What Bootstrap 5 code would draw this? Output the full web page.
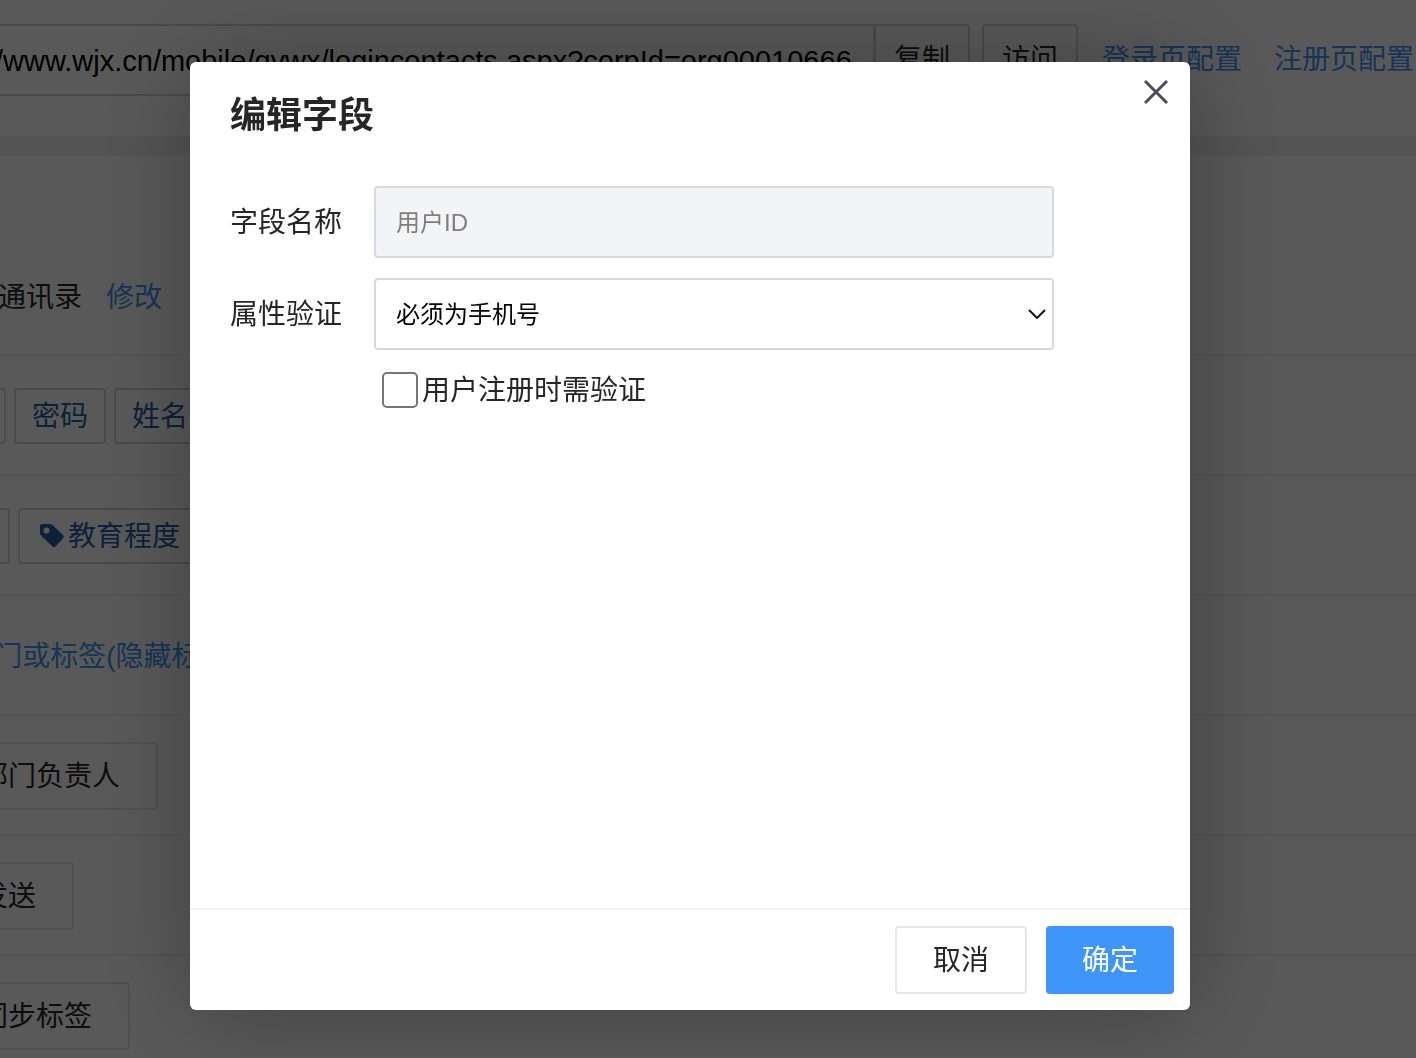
<!DOCTYPE html>
<html lang="zh-CN">
<head>
<meta charset="utf-8">
<meta name="viewport" content="width=device-width, initial-scale=1">
<title>编辑字段</title>
<link rel="stylesheet" href="https://cdn.jsdelivr.net/npm/bootstrap@5.3.0/dist/css/bootstrap.min.css">
<style>
  body {
    font-family: "Liberation Sans", "Noto Sans CJK SC", sans-serif;
    font-size: 28px;
    line-height: 40px;
    color: #262626;
    overflow: hidden;
  }
  a { color: #4095f8; text-decoration: none; }
  .backpage { height: 100vh; overflow: hidden; white-space: nowrap; }
  .linkbar { height: 136px; padding: 24px 2px 40px 0; margin-left: -106px; }
  .linkbar .form-control, .linkbar .btn {
    height: 72px; font-size: 28px; border: 2px solid #d4d4d4; border-radius: 4px; color: #262626;
  }
  .linkbar .form-control { padding: 2px 20px 0; font-size: 29px; color: #000; }
  .linkbar .btn { padding: 0 18px; }
  .linkbar .input-group .form-control { border-radius: 4px 0 0 4px; }
  .linkbar .input-group .btn { margin-left: -2px; border-radius: 0 4px 4px 0; }
  .linkbar .visit { margin-left: 12px; }
  .linkbar .links { gap: 32px; margin-left: 24px; }
  .gapband { height: 20px; background: #f0f0f0; }
  .settings { margin-left: -58px; }
  .setting { height: 120px; padding-top: 2px; border-bottom: 2px solid #f0f0f0; gap: 8px; }
  .setting > a { padding-top: 2px; }
  .setting.first { height: 200px; padding-top: 84px; gap: 24px; }
  .setting.first > span { padding-top: 2px; }
  .chip {
    height: 56px; padding: 2px 16px 0; border: 2px solid #d4d4d4; border-radius: 4px;
    font-size: 28px; line-height: 40px; color: #255ea8; background: none;
  }
  .chip.tagged { padding: 2px 18px 0; }
  .chip svg { width: 28px; height: 28px; margin-right: 2px; }
  .plain {
    height: 68px; padding: 2px 36px 0; border: 2px solid #e3e3e3; border-radius: 4px;
    font-size: 28px; color: #262626;
  }
  .modal-backdrop { --bs-backdrop-opacity: .65; }
  .modal { padding-right: 36px; }
  .modal-dialog { max-width: 1000px; margin: 62px auto 48px; }
  .modal-content {
    min-height: 948px; border: 0; border-radius: 6px; color: #262626;
    box-shadow: 2px 2px 100px rgba(0, 0, 0, .3);
  }
  .modal-header { border: 0; padding: 28px 20px 0 40px; align-items: flex-start; }
  .modal-title { font-size: 36px; line-height: 52px; font-weight: 700; }
  .closer { width: 28px; height: 28px; padding: 0; margin-top: -12px; border: 0; background: none; display: flex; }
  .modal-body { padding: 44px 136px 20px 40px; }
  .field { margin-bottom: 20px; }
  .field label.name { width: 144px; flex: none; padding-top: 2px; }
  .field .form-control, .field .form-select {
    height: 72px; padding: 0 20px; font-size: 24px; border: 2px solid #d9d9d9; border-radius: 4px;
  }
  .field .form-control:disabled { padding-bottom: 4px; background: #f2f4f5; color: #857c7c; }
  .field .form-select {
    padding-top: 2px;
    color: #000;
    background-image: url("data:image/svg+xml,%3Csvg xmlns='http://www.w3.org/2000/svg' viewBox='0 0 18 10'%3E%3Cpath d='M1 1l8 8 8-8' fill='none' stroke='%23111' stroke-width='2'/%3E%3C/svg%3E");
    background-size: 18px 10px; background-position: right 6px center;
  }
  .verify { height: 40px; margin-left: 152px; gap: 4px; }
  .verify label { padding-top: 2px; }
  .verify .form-check-input { width: 36px; height: 36px; margin: 0; border: 2px solid #767676; border-radius: 5px; }
  .modal-footer { padding: 16px; gap: 19px; border-top: 2px solid #f2f2f2; }
  .modal-footer .btn { height: 68px; margin: 0; padding: 2px 36px 0; font-size: 28px; border-radius: 4px; }
  .modal-footer .btn-cancel { border: 2px solid #e6e6e6; color: #262626; }
  .modal-footer .btn-ok { border: 0; background: #4095f8; color: #fff; }
</style>
</head>
<body>
<main class="backpage">
  <div class="linkbar d-flex align-items-center">
    <div class="input-group flex-nowrap flex-fill w-auto">
      <input type="text" class="form-control" aria-label="登录地址" value="https://www.wjx.cn/mobile/qywx/logincontacts.aspx?corpId=org000106660088">
      <button type="button" class="btn">复制</button>
    </div>
    <button type="button" class="btn visit">访问</button>
    <div class="links d-flex">
      <a href="#">登录页配置</a>
      <a href="#">注册页配置</a>
    </div>
  </div>
  <div class="gapband"></div>
  <div class="settings">
    <div class="setting first d-flex align-items-center"><span>企业通讯录</span><a href="#">修改</a></div>
    <div class="setting d-flex align-items-center">
      <button type="button" class="chip">ID</button>
      <button type="button" class="chip">密码</button>
      <button type="button" class="chip">姓名</button>
    </div>
    <div class="setting d-flex align-items-center">
      <button type="button" class="chip tagged">全</button>
      <button type="button" class="chip tagged d-flex align-items-center">
        <svg viewBox="0 0 28 28" aria-hidden="true"><path fill="currentColor" fill-rule="evenodd" d="M4 1h8q1.500 0 2.500 1L25 12q1.800 1.700 0 3.400L17.500 23.500q-1.500 1.500-3 0L3 12.500q-1-1-1-2.500V3q0-2 2-2zM8.500 4.500a3 3 0 1 0 0 6 3 3 0 0 0 0-6z"/></svg>教育程度
      </button>
    </div>
    <div class="setting d-flex align-items-center"><a href="#">+ 部门或标签(隐藏标签)</a></div>
    <div class="setting d-flex align-items-center"><button type="button" class="btn plain">部门负责人</button></div>
    <div class="setting d-flex align-items-center"><button type="button" class="btn plain">发送</button></div>
    <div class="setting d-flex align-items-center"><button type="button" class="btn plain">同步标签</button></div>
  </div>
</main>

<div class="modal-backdrop show"></div>
<div class="modal d-block" role="dialog" aria-modal="true" aria-labelledby="dialogTitle">
  <div class="modal-dialog">
    <div class="modal-content">
      <div class="modal-header justify-content-between">
        <h1 class="modal-title" id="dialogTitle">编辑字段</h1>
        <button type="button" class="closer" aria-label="关闭">
          <svg width="28" height="28" viewBox="0 0 28 28"><path d="M3 3l22 22M25 3L3 25" fill="none" stroke="#4d4b5a" stroke-width="3"/></svg>
        </button>
      </div>
      <form class="modal-body">
        <div class="field d-flex align-items-center">
          <label class="name" for="fieldName">字段名称</label>
          <input type="text" class="form-control" id="fieldName" value="用户ID" disabled>
        </div>
        <div class="field d-flex align-items-center">
          <label class="name" for="fieldRule">属性验证</label>
          <select class="form-select" id="fieldRule"><option>必须为手机号</option></select>
        </div>
        <div class="verify d-flex align-items-center">
          <input type="checkbox" class="form-check-input" id="verifyOnSignup">
          <label for="verifyOnSignup">用户注册时需验证</label>
        </div>
      </form>
      <div class="modal-footer">
        <button type="button" class="btn btn-cancel">取消</button>
        <button type="button" class="btn btn-ok">确定</button>
      </div>
    </div>
  </div>
</div>
<script src="https://cdn.jsdelivr.net/npm/bootstrap@5.3.0/dist/js/bootstrap.bundle.min.js"></script>
</body>
</html>
